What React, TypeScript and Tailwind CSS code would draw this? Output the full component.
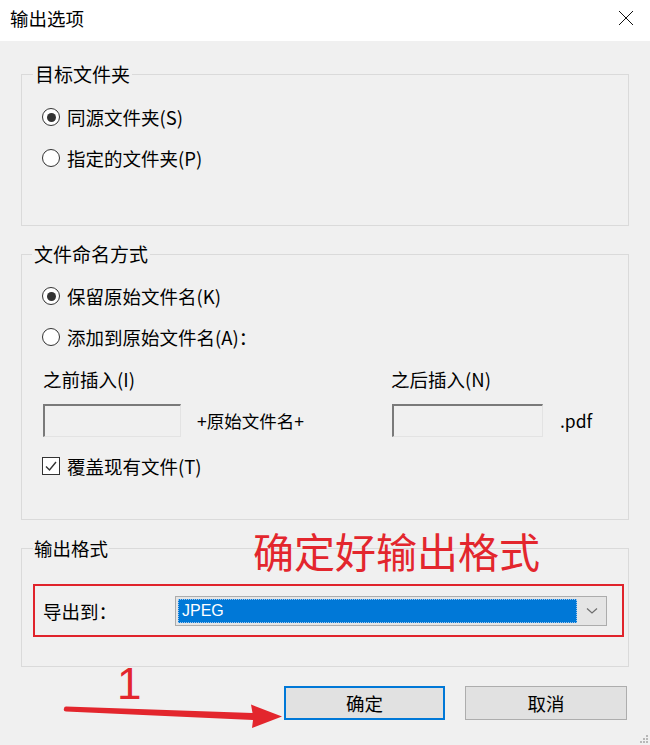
function Radio({ checked }: { checked?: boolean }) {
  return (
    <span className="flex h-[18px] w-[18px] shrink-0 items-center justify-center rounded-full border border-[#333333] bg-white">
      {checked && <span className="h-[9px] w-[9px] rounded-full bg-[#333333]" />}
    </span>
  );
}

function Checkbox() {
  return (
    <span className="flex h-[18px] w-[18px] shrink-0 items-center justify-center border border-[#333333] bg-white">
      <svg width="14" height="14" viewBox="0 0 14 14" fill="none">
        <path d="M2 7.5 L5.5 11 L12 3" stroke="#333333" strokeWidth="1.4" />
      </svg>
    </span>
  );
}

function Field({ width }: { width: string }) {
  return (
    <div
      className={`h-[33px] ${width} border-t-2 border-l-2 border-r border-b border-t-[#7a7a7a] border-l-[#7a7a7a] border-r-[#e3e3e3] border-b-[#e3e3e3] bg-[#f0f0f0]`}
    />
  );
}

function App() {
  return (
    <div className="relative flex h-[745px] w-[650px] flex-col overflow-hidden bg-[#f0f0f0] font-['Noto_Sans_CJK_SC',sans-serif] text-[18.5px] leading-[24px] text-black">
      {/* title bar */}
      <header className="flex h-[41px] items-start justify-between bg-white pl-[10px] pr-[16px] pt-[6px]">
        <h1 className="text-[18.5px] leading-[24px]">输出选项</h1>
        <svg width="16" height="16" viewBox="0 0 16 16" className="mt-[4px]">
          <path d="M1 1 L15 15 M15 1 L1 15" stroke="#111111" strokeWidth="1" />
        </svg>
      </header>

      <main className="flex flex-col px-[21px]">
        {/* 目标文件夹 */}
        <fieldset className="mt-[21px] border border-[#dadada]">
          <legend className="ml-[11px] px-[2px] text-[19px] leading-[24px]">目标文件夹</legend>
          <div className="flex flex-col gap-[17px] pl-[20px] pt-[19px] pb-[55px]">
            <label className="flex h-[24px] items-center gap-[7px]">
              <Radio checked />
              同源文件夹(S)
            </label>
            <label className="flex h-[24px] items-center gap-[7px]">
              <Radio />
              指定的文件夹(P)
            </label>
          </div>
        </fieldset>

        {/* 文件命名方式 */}
        <fieldset className="mt-[16px] border border-[#dadada]">
          <legend className="ml-[10px] px-[2px] text-[19px] leading-[24px]">文件命名方式</legend>
          <div className="flex flex-col pl-[20px] pt-[18px] pb-[41px]">
            <label className="flex h-[24px] items-center gap-[7px]">
              <Radio checked />
              保留原始文件名(K)
            </label>
            <label className="mt-[17px] flex h-[24px] items-center gap-[7px]">
              <Radio />
              添加到原始文件名(A)：
            </label>
            <div className="mt-[18px] grid grid-cols-[349px_1fr]">
              <span className="h-[24px] pl-[1px]">之前插入(I)</span>
              <span className="h-[24px]">之后插入(N)</span>
            </div>
            <div className="mt-[13px] grid grid-cols-[350px_1fr] items-center">
              <div className="flex items-center pl-[1px]">
                <Field width="w-[138px]" />
                <span className="ml-[16px] text-[17.5px]">+原始文件名+</span>
              </div>
              <div className="flex items-center">
                <Field width="w-[151px]" />
                <span className="ml-[17px] text-[17.5px]">.pdf</span>
              </div>
            </div>
            <label className="mt-[17px] flex h-[24px] items-center gap-[7px]">
              <Checkbox />
              覆盖现有文件(T)
            </label>
          </div>
        </fieldset>

        {/* 输出格式 */}
        <fieldset className="mt-[16px] border border-[#dadada]">
          <legend className="ml-[11px] px-[1px] leading-[24px]">输出格式</legend>
          <div className="pt-[24px] pb-[29px] pl-[11px] pr-[4px]">
            <div className="flex h-[53px] items-center border-2 border-[#e0232b] pl-[8px]">
              <span className="w-[132px]">导出到：</span>
              <div className="flex h-[30px] w-[432px] items-center border border-[#acacac] bg-[#e5e5e5] pl-[2px]">
                <div className="flex h-[24px] w-[399px] items-center border border-dotted border-[#9cc6ee] bg-[#0078d7] pl-[3px] font-['Liberation_Sans',sans-serif] text-[16px] text-white">
                  JPEG
                </div>
                <div className="flex flex-1 items-center justify-center">
                  <svg width="12" height="8" viewBox="0 0 12 8">
                    <path d="M1 1.5 L6 6 L11 1.5" stroke="#6d6d6d" strokeWidth="1.2" fill="none" />
                  </svg>
                </div>
              </div>
            </div>
          </div>
        </fieldset>

        {/* buttons */}
        <div className="mt-[19px] flex justify-end gap-[20px] pr-[2px]">
          <button className="flex h-[34px] w-[161px] items-center justify-center border-2 border-[#0078d7] bg-[#e1e1e1] text-[18.5px]">
            确定
          </button>
          <button className="flex h-[34px] w-[162px] items-center justify-center border border-[#adadad] bg-[#e1e1e1] text-[18.5px]">
            取消
          </button>
        </div>
      </main>

      {/* annotations */}
      <span className="absolute left-[253px] top-[526px] text-[41px] leading-[48px] text-[#e3262d]">
        确定好输出格式
      </span>
      <span className="absolute left-[117px] top-[659px] font-['Liberation_Sans',sans-serif] text-[44px] leading-[50px] text-[#e3262d]">
        1
      </span>
      <svg className="absolute left-0 top-[695px]" width="300" height="40" viewBox="0 695 300 40">
        <path
          d="M64 708.5 Q63 711 66 711.5 L253 720 L252 728 L282 716.5 L251 704.5 L252.5 713 L66 706.5 Q64 706.5 64 708.5 Z"
          fill="#e3262d"
        />
      </svg>

      {/* resize grip */}
      <svg className="absolute bottom-[1px] right-[1px]" width="10" height="10" viewBox="0 0 10 10">
        <rect x="7" y="1" width="2" height="2" fill="#b8b8b8" />
        <rect x="4" y="4" width="2" height="2" fill="#b8b8b8" />
        <rect x="7" y="4" width="2" height="2" fill="#b8b8b8" />
        <rect x="1" y="7" width="2" height="2" fill="#b8b8b8" />
        <rect x="4" y="7" width="2" height="2" fill="#b8b8b8" />
        <rect x="7" y="7" width="2" height="2" fill="#b8b8b8" />
      </svg>
    </div>
  );
}

export default App;
